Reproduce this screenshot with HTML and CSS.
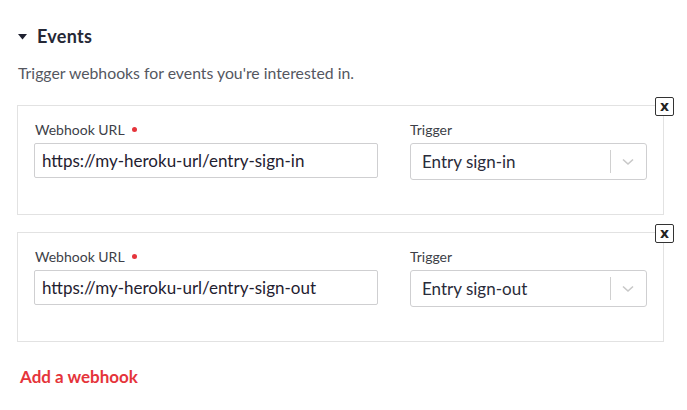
FILE: index.html
```html
<!DOCTYPE html>
<html>
<head>
<meta charset="utf-8">
<link rel="stylesheet" href="styles.css">
</head>
<body>
<div class="page">
  <div class="section-header">
    <svg class="caret" width="9" height="6" viewBox="0 0 9 6"><path d="M0 0 L9 0 L4.5 5.5 Z" fill="#1f2130"/></svg>
    <h2 class="title">Events</h2>
  </div>
  <p class="desc">Trigger webhooks for events you're interested in.</p>
  <div class="cards">
    <div class="card">
      <button class="remove">x</button>
      <div class="field url-field">
        <label class="label">Webhook URL <span class="req"></span></label>
        <div class="input">https://my-heroku-url/entry-sign-in</div>
      </div>
      <div class="field trigger-field">
        <label class="label">Trigger</label>
        <div class="select">
          <span class="select-value">Entry sign-in</span>
          <span class="sep"></span>
          <svg class="chev" width="12" height="8" viewBox="0 0 12 8"><path d="M1 1.5 L6 6 L11 1.5" fill="none" stroke="#c8c8c8" stroke-width="1.6"/></svg>
        </div>
      </div>
    </div>
    <div class="card">
      <button class="remove">x</button>
      <div class="field url-field">
        <label class="label">Webhook URL <span class="req"></span></label>
        <div class="input">https://my-heroku-url/entry-sign-out</div>
      </div>
      <div class="field trigger-field">
        <label class="label">Trigger</label>
        <div class="select">
          <span class="select-value">Entry sign-out</span>
          <span class="sep"></span>
          <svg class="chev" width="12" height="8" viewBox="0 0 12 8"><path d="M1 1.5 L6 6 L11 1.5" fill="none" stroke="#c8c8c8" stroke-width="1.6"/></svg>
        </div>
      </div>
    </div>
  </div>
  <a class="add">Add a webhook</a>
</div>
</body>
</html>
```

FILE: styles.css
```css
* { box-sizing: border-box; }
html, body { margin: 0; padding: 0; background: #fff; }
body {
  font-family: Lato, "Open Sans", sans-serif;
  color: #2a2c3a;
}
.page {
  padding: 25px 24px 0 17px;
  width: 687px;
}
.section-header {
  display: flex;
  align-items: center;
  gap: 10px;
  padding-left: 1px;
  height: 22px;
}
.caret { display: block; margin-top: 1px; }
.title {
  margin: 0;
  font-size: 18px;
  font-weight: 700;
  color: #262836;
  line-height: 22px;
  letter-spacing: 0.3px;
}
.desc {
  margin: 16px 0 0 1px;
  font-size: 15.8px;
  line-height: 20px;
  color: #55575f;
}
.cards {
  margin-top: 22px;
  display: flex;
  flex-direction: column;
  gap: 17px;
  width: 647px;
}
.card {
  position: relative;
  border: 1px solid #e2e2e2;
  height: 110px;
  padding: 15px 15px 0 16px;
  display: flex;
  gap: 32px;
}
.remove {
  position: absolute;
  top: -9px;
  right: -11px;
  width: 19px;
  height: 19px;
  border: 1px solid #333;
  border-radius: 2px;
  background: #fff;
  font-family: "DejaVu Sans", sans-serif;
  font-weight: 700;
  font-size: 14px;
  line-height: 14px;
  padding: 0 0 2px;
  color: #222;
}
.field { display: flex; flex-direction: column; }
.url-field { width: 344px; }
.trigger-field { width: 237px; }
.label {
  font-size: 14px;
  line-height: 18px;
  color: #3d3f48;
  height: 22px;
  display: flex;
  align-items: flex-start;
}
.url-field .label { padding-left: 1px; }
.req {
  display: inline-block;
  width: 5px;
  height: 5px;
  border-radius: 50%;
  background: #e5343b;
  margin-left: 7px;
  margin-top: 6px;
}
.input {
  height: 35px;
  border: 1px solid #cfcfd1;
  border-radius: 2px;
  padding: 0 7px;
  font-size: 17px;
  line-height: 33px;
  color: #1f2130;
}
.select {
  height: 37px;
  border: 1px solid #cfcfd1;
  border-radius: 3px;
  display: flex;
  align-items: center;
  padding-left: 11px;
}
.select-value {
  flex: 1;
  font-size: 17px;
  color: #2a2c3a;
}
.sep {
  width: 1px;
  height: 23px;
  background: #d0d0d0;
}
.chev { margin: 0 12px 0 11px; }
.add {
  display: block;
  margin: 24px 0 0 3px;
  font-size: 17px;
  font-weight: 700;
  color: #e5343b;
}
```
